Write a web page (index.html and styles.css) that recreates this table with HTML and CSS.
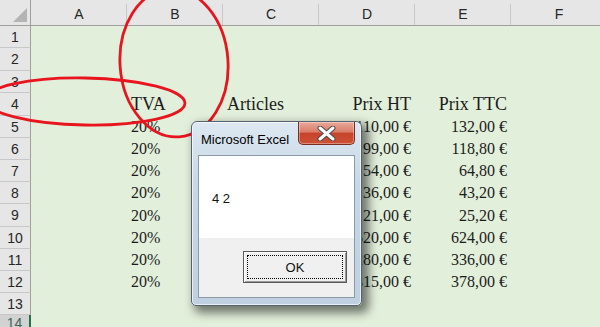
FILE: index.html
```html
<!DOCTYPE html>
<html>
<head>
<meta charset="utf-8">
<link rel="stylesheet" href="styles.css">
</head>
<body>
<div class="app">
  <div class="sheet">
    <div class="corner"><span class="tri"></span></div>
    <div class="ch">A</div><div class="ch">B</div><div class="ch">C</div><div class="ch">D</div><div class="ch">E</div><div class="ch">F</div>

    <div class="rh">1</div><div class="c"></div><div class="c"></div><div class="c"></div><div class="c"></div><div class="c"></div><div class="c"></div>
    <div class="rh">2</div><div class="c"></div><div class="c"></div><div class="c"></div><div class="c"></div><div class="c"></div><div class="c"></div>
    <div class="rh">3</div><div class="c"></div><div class="c"></div><div class="c"></div><div class="c"></div><div class="c"></div><div class="c"></div>
    <div class="rh">4</div><div class="c"></div><div class="c h">TVA</div><div class="c h">Articles</div><div class="c h r">Prix HT</div><div class="c h r">Prix TTC</div><div class="c"></div>
    <div class="rh">5</div><div class="c"></div><div class="c">20%</div><div class="c"></div><div class="c r">110,00 €</div><div class="c r">132,00 €</div><div class="c"></div>
    <div class="rh">6</div><div class="c"></div><div class="c">20%</div><div class="c"></div><div class="c r">99,00 €</div><div class="c r">118,80 €</div><div class="c"></div>
    <div class="rh">7</div><div class="c"></div><div class="c">20%</div><div class="c"></div><div class="c r">54,00 €</div><div class="c r">64,80 €</div><div class="c"></div>
    <div class="rh">8</div><div class="c"></div><div class="c">20%</div><div class="c"></div><div class="c r">36,00 €</div><div class="c r">43,20 €</div><div class="c"></div>
    <div class="rh">9</div><div class="c"></div><div class="c">20%</div><div class="c"></div><div class="c r">21,00 €</div><div class="c r">25,20 €</div><div class="c"></div>
    <div class="rh">10</div><div class="c"></div><div class="c">20%</div><div class="c"></div><div class="c r">520,00 €</div><div class="c r">624,00 €</div><div class="c"></div>
    <div class="rh">11</div><div class="c"></div><div class="c">20%</div><div class="c"></div><div class="c r">280,00 €</div><div class="c r">336,00 €</div><div class="c"></div>
    <div class="rh">12</div><div class="c"></div><div class="c">20%</div><div class="c"></div><div class="c r">315,00 €</div><div class="c r">378,00 €</div><div class="c"></div>
    <div class="rh">13</div><div class="c"></div><div class="c"></div><div class="c"></div><div class="c"></div><div class="c"></div><div class="c"></div>
    <div class="rh sel">14</div><div class="c"></div><div class="c"></div><div class="c"></div><div class="c"></div><div class="c"></div><div class="c"></div>
  </div>

  <svg class="marks" width="600" height="327" viewBox="0 0 600 327">
    <ellipse cx="174" cy="63" rx="54" ry="74" transform="rotate(-4 174 63)"/>
    <ellipse cx="85" cy="101.5" rx="100" ry="23.5" transform="rotate(1 85 101.5)"/>
  </svg>

  <div class="dialog">
    <div class="titlebar">
      <span class="title">Microsoft Excel</span>
      <span class="close">
        <svg width="19" height="15" viewBox="0 0 19 15">
          <path d="M3 2 L16 13 M16 2 L3 13" stroke="#4a4a4a" stroke-width="5" stroke-linecap="round"/>
          <path d="M3 2 L16 13 M16 2 L3 13" stroke="#ffffff" stroke-width="3" stroke-linecap="round"/>
        </svg>
      </span>
    </div>
    <div class="client">
      <div class="msg">4 2</div>
      <div class="btnbar">
        <div class="ok"><span class="focus">OK</span></div>
      </div>
    </div>
  </div>
</div>
</body>
</html>
```

FILE: styles.css
```css
* { box-sizing: border-box; margin: 0; padding: 0; }
html, body { width: 600px; height: 327px; overflow: hidden; background: #e2efda; }

.app { position: relative; width: 600px; height: 327px; overflow: hidden; }

.sheet {
  display: grid;
  grid-template-columns: 31px repeat(6, 96px);
  grid-template-rows: 26px 22px 23px 22px 23px 22px 22px 22px 22px 23px 22px 22px 22px 22px 22px;
  background: #e2efda;
}

.corner {
  background: #e6e6e6;
  border-right: 1px solid #9f9f9f;
  border-bottom: 1px solid #9f9f9f;
  display: flex;
  justify-content: flex-end;
  align-items: flex-end;
  padding: 0 3px 3px 0;
}
.tri {
  width: 14px; height: 14px;
  background: #b4b4b4;
  clip-path: polygon(100% 0, 100% 100%, 0 100%);
}

.ch {
  background: linear-gradient(#c8c8c8, #c8c8c8) right bottom / 1px 21px no-repeat, #e6e6e6;
  border-bottom: 1px solid #9f9f9f;
  font: 14px "Liberation Sans", sans-serif;
  color: #262626;
  display: flex;
  align-items: center;
  justify-content: center;
  padding-top: 2px;
}

.rh {
  background: #e6e6e6;
  border-right: 1px solid #9f9f9f;
  border-bottom: 1px solid #c8c8c8;
  font: 14px "Liberation Sans", sans-serif;
  color: #262626;
  display: flex;
  align-items: center;
  justify-content: center;
}
.rh.sel {
  background: #d2d2d2;
  border-right: 2px solid #217346;
  color: #44665a;
  align-items: flex-start;
  padding-top: 1px;
  line-height: 15px;
}

.c {
  display: flex;
  align-items: flex-end;
  padding: 0 4px 3px;
  font-family: "Liberation Serif", serif;
  font-size: 16px;
  line-height: 1;
  color: #1c1c1c;
  white-space: nowrap;
}
.c.r { justify-content: flex-end; }
.c.h { font-size: 18px; }

.marks { position: absolute; left: 0; top: 0; pointer-events: none; }
.marks ellipse { fill: none; stroke: #e8141e; stroke-width: 2.8; }

.dialog {
  position: absolute;
  left: 191px; top: 121px;
  width: 171px; height: 185px;
  border: 1px solid #56626e;
  border-radius: 6px 6px 5px 5px;
  background: linear-gradient(180deg, #dde8f1 0%, #c6d7e6 35%, #bfd1e1 100%);
  box-shadow: inset 0 0 0 1px rgba(255,255,255,0.65), 5px 5px 10px 2px rgba(0,0,0,0.5);
  display: flex;
  flex-direction: column;
  font-family: "Liberation Sans", sans-serif;
}
.titlebar {
  height: 33px;
  display: flex;
  align-items: flex-start;
  padding: 0 6px 0 9px;
}
.title { font-size: 13px; line-height: 15px; color: #000; margin-top: 10px; }
.close {
  margin-left: auto;
  width: 57px; height: 23px;
  border: 1px solid #7b2b1f;
  border-top: none;
  border-radius: 0 0 5px 5px;
  background: linear-gradient(180deg, #e9a89a 0%, #db7d68 45%, #c5432c 52%, #cc5236 100%);
  box-shadow: inset 0 0 0 1px rgba(255,255,255,0.35);
  display: flex;
  align-items: center;
  justify-content: center;
}
.client {
  flex: 1;
  margin: 0 6px 7px;
  border: 1px solid #8c9aa8;
  background: #fff;
  display: flex;
  flex-direction: column;
}
.msg { height: 82px; padding: 35px 0 0 13px; font-size: 13px; line-height: 15px; color: #111; }
.btnbar {
  flex: 1;
  background: #f0f0f0;
  display: flex;
  justify-content: flex-end;
  align-items: flex-start;
  padding: 13px 7px 0 0;
}
.ok {
  width: 104px; height: 32px;
  border: 1px solid #5a5a5a;
  background: #f0f0f0;
  box-shadow: inset 1px 1px 0 #ffffff, inset -1px -1px 0 #9a9a9a;
  padding: 3px;
  display: flex;
}
.focus {
  flex: 1;
  border: 1px dotted #000;
  display: flex;
  align-items: center;
  justify-content: center;
  font-size: 13px;
  color: #111;
}
```
